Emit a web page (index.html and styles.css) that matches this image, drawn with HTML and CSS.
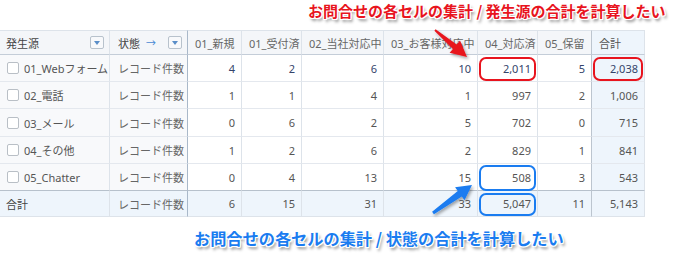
FILE: index.html
```html
<!DOCTYPE html>
<html lang="ja">
<head>
<meta charset="utf-8">
<link rel="stylesheet" href="styles.css">
</head>
<body>
<div class="page">
  <div class="note-top"><span class="note red">お問合せの各セルの集計 / 発生源の合計を計算したい</span></div>
  <div class="grid">
    <div class="row head">
      <div class="cell c1">発生源<span class="dd"></span></div>
      <div class="cell c2">状態 <span class="harrow">→</span><span class="dd"></span></div>
      <div class="cell n">01_新規</div>
      <div class="cell n">01_受付済</div>
      <div class="cell n">02_当社対応中</div>
      <div class="cell n">03_お客様対応中</div>
      <div class="cell n">04_対応済</div>
      <div class="cell n c8">05_保留</div>
      <div class="cell n tot">合計</div>
    </div>
    <div class="row body r1">
      <div class="cell c1"><span class="cb"></span>01_Webフォーム</div>
      <div class="cell c2">レコード件数</div>
      <div class="cell n">4</div>
      <div class="cell n">2</div>
      <div class="cell n">6</div>
      <div class="cell n">10</div>
      <div class="cell n hl hl-red">2,011</div>
      <div class="cell n c8">5</div>
      <div class="cell n tot hl hl-red">2,038</div>
    </div>
    <div class="row body">
      <div class="cell c1"><span class="cb"></span>02_電話</div>
      <div class="cell c2">レコード件数</div>
      <div class="cell n">1</div>
      <div class="cell n">1</div>
      <div class="cell n">4</div>
      <div class="cell n">1</div>
      <div class="cell n">997</div>
      <div class="cell n c8">2</div>
      <div class="cell n tot">1,006</div>
    </div>
    <div class="row body">
      <div class="cell c1"><span class="cb"></span>03_メール</div>
      <div class="cell c2">レコード件数</div>
      <div class="cell n">0</div>
      <div class="cell n">6</div>
      <div class="cell n">2</div>
      <div class="cell n">5</div>
      <div class="cell n">702</div>
      <div class="cell n c8">0</div>
      <div class="cell n tot">715</div>
    </div>
    <div class="row body">
      <div class="cell c1"><span class="cb"></span>04_その他</div>
      <div class="cell c2">レコード件数</div>
      <div class="cell n">1</div>
      <div class="cell n">2</div>
      <div class="cell n">6</div>
      <div class="cell n">2</div>
      <div class="cell n">829</div>
      <div class="cell n c8">1</div>
      <div class="cell n tot">841</div>
    </div>
    <div class="row body last">
      <div class="cell c1"><span class="cb"></span>05_Chatter</div>
      <div class="cell c2">レコード件数</div>
      <div class="cell n">0</div>
      <div class="cell n">4</div>
      <div class="cell n">13</div>
      <div class="cell n">15</div>
      <div class="cell n hl hl-blue">508</div>
      <div class="cell n c8">3</div>
      <div class="cell n tot">543</div>
    </div>
    <div class="row foot">
      <div class="cell c1">合計</div>
      <div class="cell c2">レコード件数</div>
      <div class="cell n">6</div>
      <div class="cell n">15</div>
      <div class="cell n">31</div>
      <div class="cell n">33</div>
      <div class="cell n hl hl-blue hl-foot">5,047</div>
      <div class="cell n c8">11</div>
      <div class="cell n tot">5,143</div>
    </div>
  </div>
  <div class="note-bottom"><span class="note blue">お問合せの各セルの集計 / 状態の合計を計算したい</span></div>
  <svg class="arrows" width="673" height="256" viewBox="0 0 673 256">
    <defs>
      <filter id="sh" x="-30%" y="-30%" width="160%" height="160%">
        <feDropShadow dx="1.5" dy="2" stdDeviation="1.5" flood-color="#000" flood-opacity="0.35"/>
      </filter>
    </defs>
    <polygon filter="url(#sh)" fill="#e8141e" points="435.6,29.2 456.7,44.4 460,40.6 467,57 449.6,52.8 452.9,49 434.4,30.8"/>
    <polygon filter="url(#sh)" fill="#1a7cf0" points="432.1,211.8 457.8,190.9 455.1,187.2 472,185 464.5,200.2 461.8,196.5 433.9,214.2"/>
  </svg>
</div>
</body>
</html>
```

FILE: styles.css
```css
html, body {
  margin: 0;
  padding: 0;
  background: #fff;
}

.page {
  position: relative;
  width: 673px;
  height: 256px;
  overflow: hidden;
  font-family: "Noto Sans", "Noto Sans CJK JP", sans-serif;
  font-size: 11px;
  color: #555;
}

.note-top {
  height: 30px;
  box-sizing: border-box;
  padding: 1px 0 0 308px;
  white-space: nowrap;
}

.note-bottom {
  padding: 11px 0 0 194px;
  white-space: nowrap;
}

.note {
  font-family: "Noto Sans CJK JP", sans-serif;
  font-weight: 700;
  line-height: 20px;
  text-shadow:
    -1px -1px 0 #fff, 1px -1px 0 #fff, -1px 1px 0 #fff, 1px 1px 0 #fff,
    0 -1px 0 #fff, 0 1px 0 #fff, -1px 0 0 #fff, 1px 0 0 #fff,
    2px 3px 3px rgba(0, 0, 0, 0.45);
}

.red {
  color: #e8141e;
  font-size: 15px;
}

.blue {
  color: #1a7cf0;
  font-size: 16.2px;
}

.grid {
  display: grid;
  grid-template-columns: 110px 78px 54px 60px 82px 94px 60px 54px 53px;
  grid-template-rows: 25px 27px 27px 28px 27px 27px 26px;
  width: 645px;
}

.row {
  display: contents;
}

.cell {
  position: relative;
  box-sizing: border-box;
  display: flex;
  align-items: center;
  border-right: 1px solid #dde3ea;
  border-bottom: 1px solid #e4e8ee;
  white-space: nowrap;
  background: #fff;
}

.cell.c1,
.cell.c2 {
  background: #f8f9fb;
}

.cell.c1 {
  padding-left: 7px;
  gap: 5px;
}

.cell.c2 {
  padding-left: 8px;
  border-right-color: #a9b8c9;
  color: #666;
}

.cell.n {
  justify-content: flex-end;
  padding-right: 6px;
}

.cell.c8 {
  border-right-color: #bcc5cf;
}

.cell.tot {
  background: #eef5fc;
}

/* header */
.head .cell {
  background: #f4f6f9;
  border-top: 1px solid #dde3ea;
  border-bottom-color: #c4cdd8;
  color: #666;
}

.head .cell.n {
  justify-content: flex-start;
  padding-left: 7px;
  padding-right: 0;
}

.head .cell.c1,
.head .cell.c2 {
  color: #444;
  padding-right: 5px;
}

.head .cell.c1 {
  padding-left: 6px;
  gap: 0;
}

.head .cell.tot {
  background: #eef5fc;
  color: #555;
}

.harrow {
  color: #4a8ad4;
  margin-left: 6px;
  font-size: 10px;
}

.dd {
  margin-left: auto;
  width: 14px;
  height: 13px;
  box-sizing: border-box;
  border: 1px solid #b8c2cc;
  border-radius: 2px;
  background: #f8f9fb;
  position: relative;
}

.dd::after {
  content: "";
  position: absolute;
  left: 3px;
  top: 4px;
  border-left: 3.5px solid transparent;
  border-right: 3.5px solid transparent;
  border-top: 4px solid #5a8ec8;
}

/* body rows */
.cb {
  width: 12px;
  height: 12px;
  box-sizing: border-box;
  border: 1px solid #b9bfc6;
  border-radius: 2px;
  background: #fff;
  flex: none;
}

.r1 .cell.n {
  color: #34446a;
}

.last .cell {
  border-bottom-color: #b7c1cc;
}

.foot .cell {
  background: #eef5fc;
  border-bottom-color: #dde3ea;
}

.foot .cell.c1 {
  padding-left: 6px;
  color: #444;
}

/* highlight boxes */
.hl::after {
  content: "";
  position: absolute;
  top: 2px;
  left: 1px;
  right: 1px;
  bottom: 0;
  border: 2px solid;
  border-radius: 7px;
  pointer-events: none;
}

.hl-red::after {
  border-color: #e8141e;
}

.hl-blue::after {
  border-color: #1a7cf0;
  top: 1px;
  bottom: -1px;
}

.hl-foot::after {
  top: 2px;
  bottom: 0;
}

.arrows {
  position: absolute;
  left: 0;
  top: 0;
  pointer-events: none;
}
```
